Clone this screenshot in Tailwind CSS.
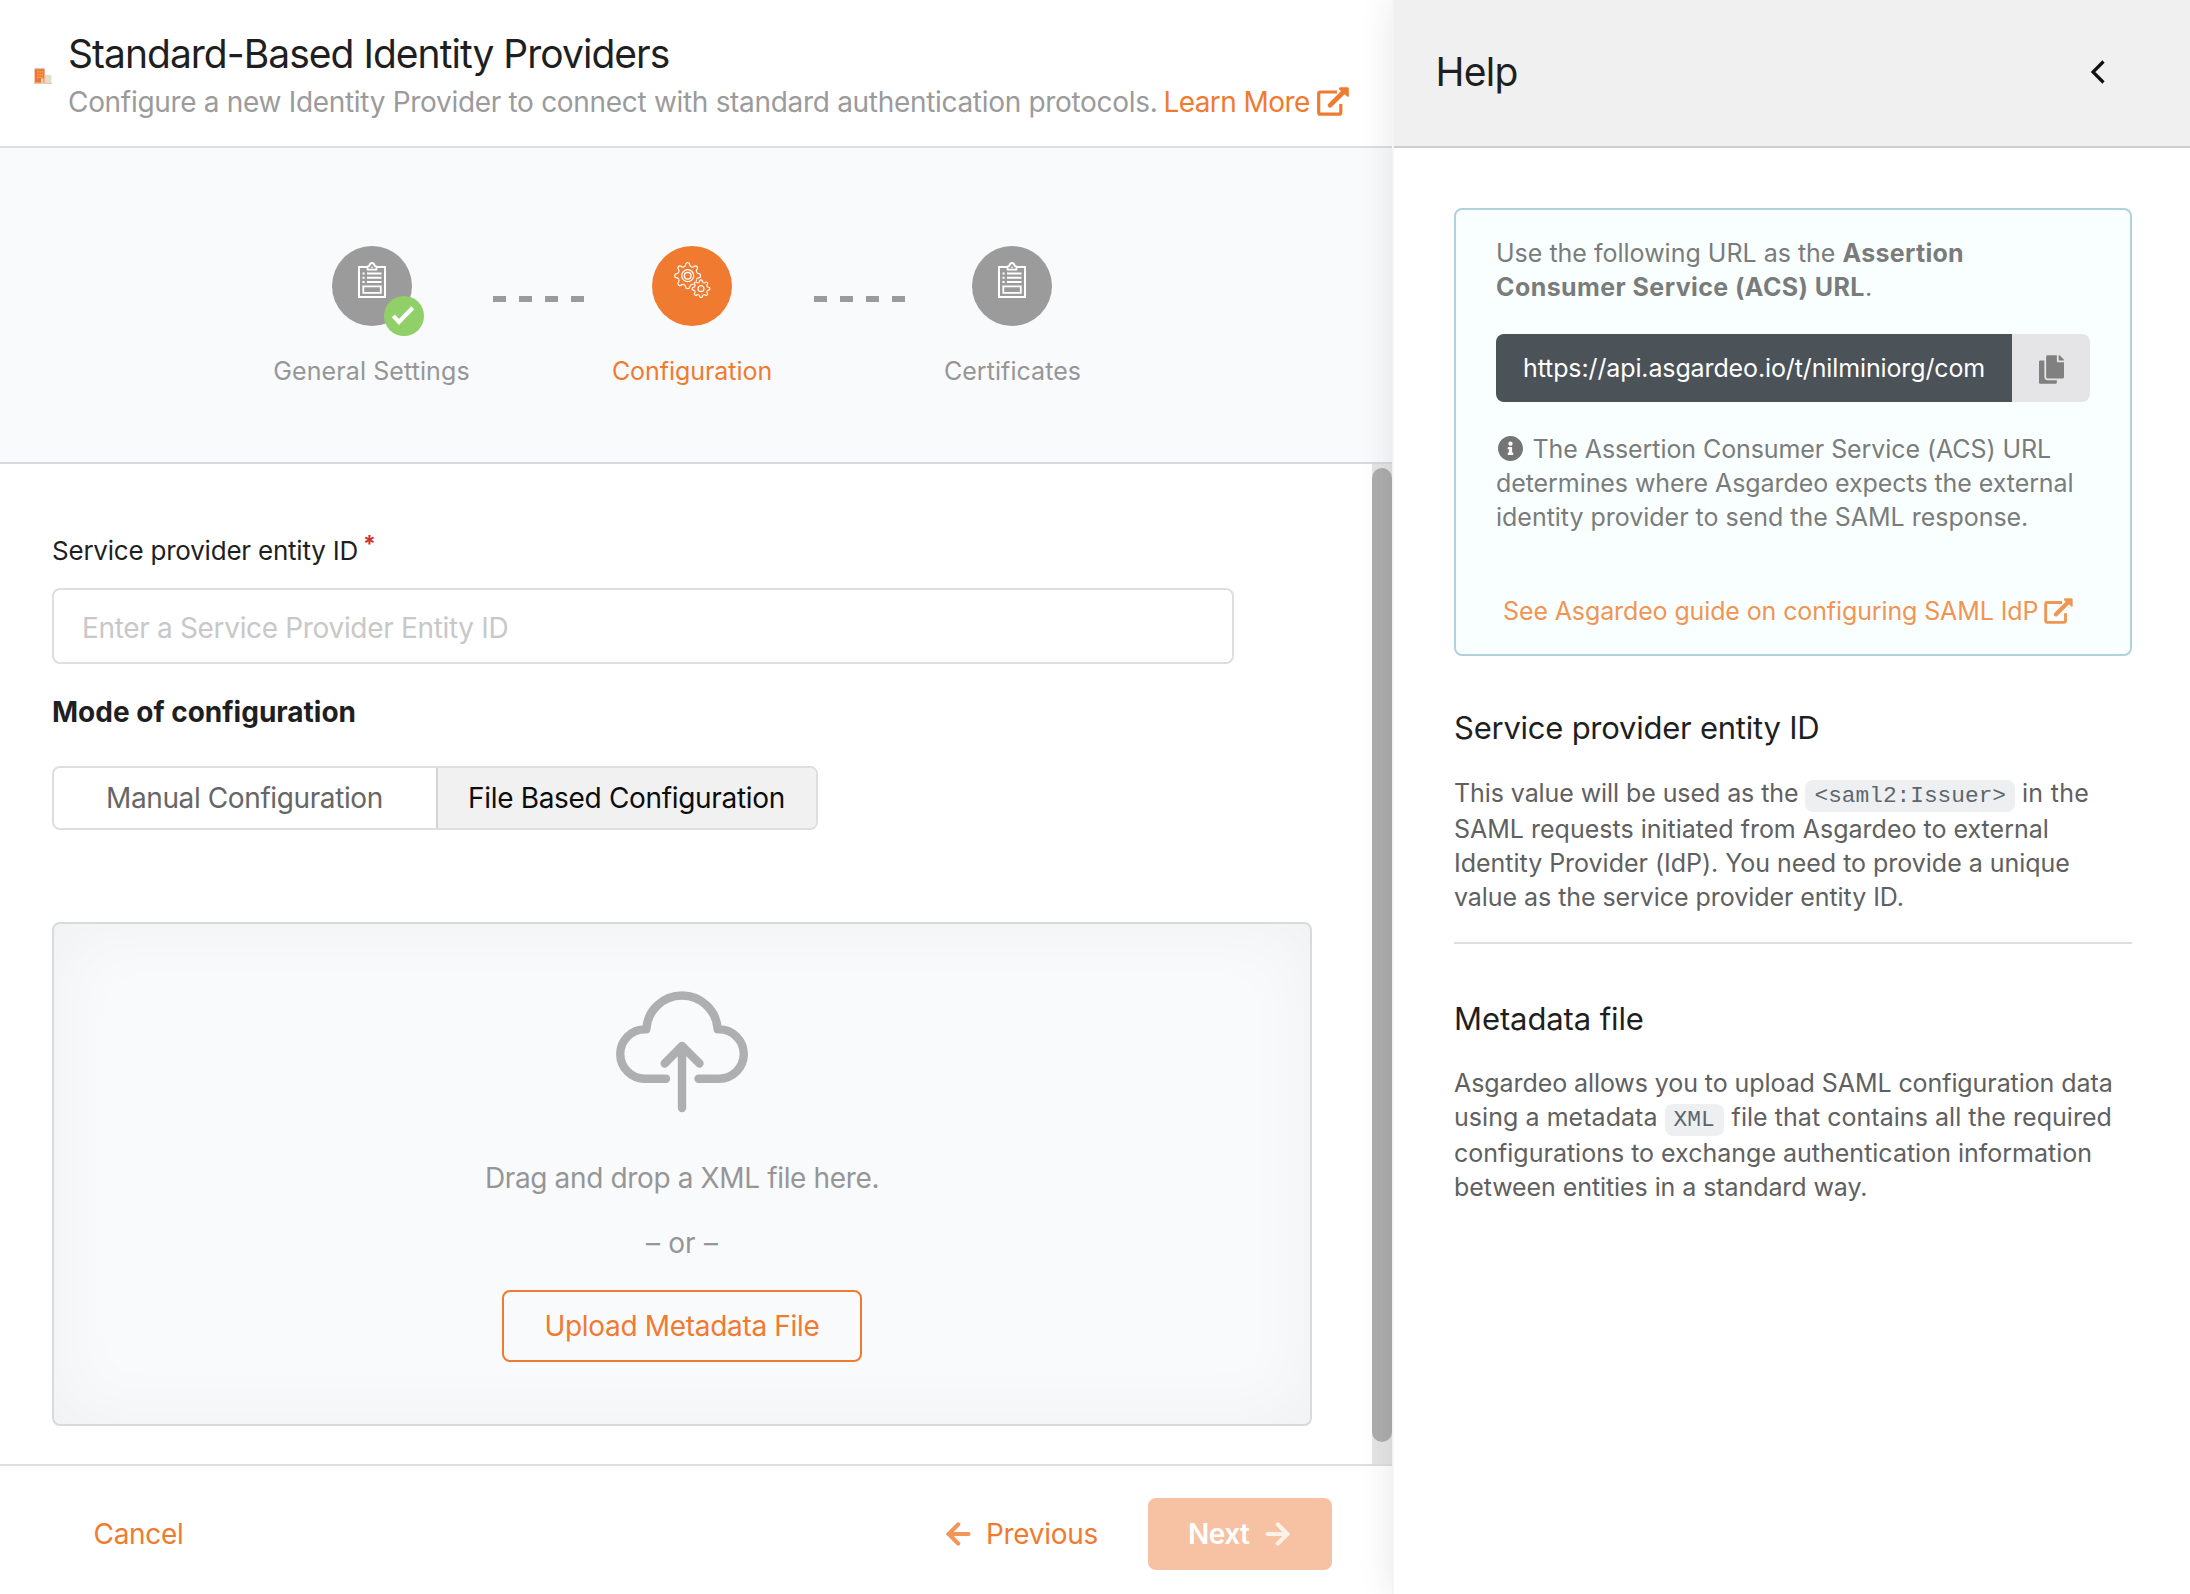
<!DOCTYPE html>
<html lang="en">
<head>
<meta charset="utf-8">
<title>Standard-Based Identity Providers</title>
<script src="https://cdn.jsdelivr.net/npm/@tailwindcss/browser@4"></script>
</head>
<body class="bg-white font-['Inter',sans-serif] text-[#1f1f1f]">

<!-- Shared symbols -->
<svg width="0" height="0" class="absolute">
  <defs>
    <symbol id="external" viewBox="0 0 32 29">
      <path d="M20 5H3.4Q1.7 5 1.7 6.7V25.4Q1.7 27.2 3.4 27.2H22Q23.8 27.2 23.8 25.4V17" fill="none" stroke="currentColor" stroke-width="3.2"/>
      <path d="M13 18.3L27 4.5" fill="none" stroke="currentColor" stroke-width="4.6" stroke-linecap="round"/>
      <path d="M23 .3H30.6Q31.8 .3 31.8 1.5V9Q31.6 10.4 30.3 9.6L22.2 2.4Q21.4 .7 23 .3Z" fill="currentColor"/>
    </symbol>
    <symbol id="clipboard" viewBox="0 0 28 36">
      <g fill="none" stroke="white">
        <path d="M9 5H1V35H27V5H19" stroke-width="2"/>
        <path d="M9.6 7.6V4.6L11.4 3.6Q12 1 14 1T16.6 3.6L18.4 4.6V7.6Z" stroke-width="1.8"/>
        <path d="M4.5 11.4H6.6M9 11.4H23.5M4.5 15.8H6.6M9 15.8H23.5M4.5 20.1H6.6M9 20.1H23.5" stroke-width="2"/>
        <path d="M5.3 24.4H22.8V30.8H5.3Z" stroke-width="1.8"/>
      </g>
      <path d="M12.6 5.8L14 4.2L15.4 5.8Z" fill="white"/>
    </symbol>
    <path id="tooth" d="M-3.6-8.9Q-2.3-9.4-2.1-11Q-1.9-13 0-13T2.1-11Q2.3-9.4 3.6-8.9"/>
    <g id="gear">
      <use href="#tooth"/><use href="#tooth" transform="rotate(45)"/><use href="#tooth" transform="rotate(90)"/><use href="#tooth" transform="rotate(135)"/>
      <use href="#tooth" transform="rotate(180)"/><use href="#tooth" transform="rotate(225)"/><use href="#tooth" transform="rotate(270)"/><use href="#tooth" transform="rotate(315)"/>
    </g>
  </defs>
</svg>

<div class="flex h-[1594px] w-[2190px] overflow-hidden">

  <!-- Wizard -->
  <main class="flex w-[1392px] shrink-0 flex-col">
    <header class="flex h-[148px] shrink-0 border-b-2 border-[#dedede] pt-[30px]">
      <svg class="ml-[34px] mt-[38px] h-4 w-[18px]" viewBox="0 0 18 16">
        <path d="M11 7H17.5V15H11Z" fill="#dcdfdc"/>
        <path d="M.6 .8H10.6V15H.6Z" fill="#ee7437"/>
        <path d="M1 0H10.400V1.200H1Z" fill="#c9c4bf"/>
        <path d="M3.200 3.800H9M3.200 6.600H9M3.200 9.400H9" stroke="#fcb84e" stroke-width="1.300" stroke-dasharray="1.400 .8" fill="none"/>
        <path d="M12.300 9.400H16.500M12.300 12H16.500" stroke="#f3dd9a" stroke-width="1.200" stroke-dasharray="1.200 .5" fill="none"/>
        <path d="M7 10.500H9.600V15H7Z" fill="#d9d5d4"/>
        <path d="M0 14.600H18V16H0Z" fill="#e8cb9e"/>
      </svg>
      <div class="ml-4 whitespace-nowrap">
        <h1 class="h-12 text-[39px] leading-[48px] tracking-[-0.98px]">Standard-Based Identity Providers</h1>
        <p class="mt-1.5 flex text-[28px] leading-9 tracking-[-0.31px] text-[#9b9b9b]">
          <span>Configure a new Identity Provider to connect with standard authentication protocols.</span>
          <a class="ml-1.5 flex tracking-[-0.58px] text-[#f07b30]">Learn More<svg class="ml-[7px] mt-[3px] h-[29px] w-8"><use href="#external"/></svg></a>
        </p>
      </div>
    </header>

    <section class="flex h-[316px] shrink-0 items-start border-b-2 border-[#d9dadd] bg-[#f9fafc] pl-[212px] pt-[98px] text-[25px] leading-[34px] text-[#969696]">
      <div class="flex w-[320px] flex-col items-center">
        <div class="relative flex h-20 w-20 justify-center rounded-full bg-[#9b9b9b] pt-4">
          <svg class="h-9 w-7"><use href="#clipboard"/></svg>
          <div class="absolute left-[52px] top-[50px] flex h-10 w-10 items-center justify-center rounded-full bg-[#91cf69]">
            <svg class="h-10 w-10" viewBox="0 0 40 40"><path d="M9.300 19.800L15 26L28.700 11.800" fill="none" stroke="white" stroke-width="4.200"/></svg>
          </div>
        </div>
        <span class="mr-px mt-7 tracking-[0.1px]">General Settings</span>
      </div>
      <div class="-ml-[39px] mt-[50px] flex w-[91px] justify-between"><i class="h-1.5 w-[13px] bg-[#9b9b9b]"></i><i class="h-1.5 w-[13px] bg-[#9b9b9b]"></i><i class="h-1.5 w-[13px] bg-[#9b9b9b]"></i><i class="h-1.5 w-[13px] bg-[#9b9b9b]"></i></div>
      <div class="-ml-[52px] flex w-[320px] flex-col items-center">
        <div class="flex h-20 w-20 justify-center rounded-full bg-[#f07b30] pt-4">
          <svg class="h-9 w-9 overflow-visible" viewBox="0 0 36 36" fill="none" stroke="white">
            <g transform="translate(13.700 13.700)" stroke-width="1.200"><use href="#gear"/><circle r="6"/><circle r="3.400" stroke-width="1.300"/></g>
            <g transform="translate(27 26.700)"><circle r="8.600" fill="#f07b30" stroke="none"/><g transform="scale(.68)" stroke-width="1.700"><use href="#gear"/></g><circle r="3" stroke-width="1.200"/></g>
          </svg>
        </div>
        <span class="mt-7 tracking-[-0.05px] text-[#f07b30]">Configuration</span>
      </div>
      <div class="-ml-[38px] mt-[50px] flex w-[91px] justify-between"><i class="h-1.5 w-[13px] bg-[#9b9b9b]"></i><i class="h-1.5 w-[13px] bg-[#9b9b9b]"></i><i class="h-1.5 w-[13px] bg-[#9b9b9b]"></i><i class="h-1.5 w-[13px] bg-[#9b9b9b]"></i></div>
      <div class="-ml-[53px] flex w-[320px] flex-col items-center">
        <div class="flex h-20 w-20 justify-center rounded-full bg-[#9b9b9b] pt-4">
          <svg class="h-9 w-7"><use href="#clipboard"/></svg>
        </div>
        <span class="ml-px mt-7 tracking-[0.06px]">Certificates</span>
      </div>
    </section>

    <div class="flex h-[1000px] shrink-0">
      <form class="w-[1372px] pl-[52px] pt-[72px]">
        <label class="flex h-[30px] text-[26px] leading-[30px] tracking-[-0.22px]">Service provider entity ID<span class="-mt-[7px] ml-[5px] text-[23px] font-bold leading-[30px] text-[#d0312d]">*</span></label>
        <div class="mt-[22px] flex h-[76px] w-[1182px] items-center rounded-lg border-2 border-[#dedede] pl-7 pt-[3px] text-[28px] tracking-[-0.33px] text-[#c8c8c8]">Enter a Service Provider Entity ID</div>
        <h2 class="mt-[30px] text-[28px] font-bold leading-9">Mode of configuration</h2>
        <div class="mt-9 flex h-16 w-[766px] overflow-hidden rounded-lg border-2 border-[#dedede] text-[28px]">
          <div class="flex w-[382px] items-center pl-[52px] tracking-[-0.39px] text-[#666]">Manual Configuration</div>
          <div class="flex flex-1 items-center border-l-2 border-[#d4d4d5] bg-[#f1f1f1] pl-[30px] tracking-[-0.32px] text-[#0d0d0d]">File Based Configuration</div>
        </div>
        <div class="mt-[92px] flex h-[504px] w-[1260px] flex-col items-center rounded-lg border-2 border-[#d9dadc] bg-[#f9fafc] pt-[68px] text-[28px] leading-9 text-[#969696] shadow-[inset_0_0_76px_rgba(0,0,0,0.045)]">
          <svg class="h-[120px] w-[132px] overflow-visible" viewBox="0 0 132 120" fill="none" stroke="#aeafb1" stroke-width="8.400" stroke-linecap="round" stroke-linejoin="round">
            <path d="M50 86.700H28.900A24.650 24.650 0 0 1 28.900 37.400H30.300A35.750 35.750 0 0 1 101.700 37.400H103.100A24.650 24.650 0 0 1 103.100 86.700H82.500"/>
            <path d="M66 54V116M48.700 71.500L66 54L83.500 71.500"/>
          </svg>
          <span class="mt-12 tracking-[-0.36px]">Drag and drop a XML file here.</span>
          <span class="mt-[29px] tracking-[0.18px]">– or –</span>
          <div class="mt-[29px] flex h-[72px] w-[360px] items-center justify-center rounded-lg border-2 border-[#f07b30] tracking-[-0.32px] text-[#f07b30]">Upload Metadata File</div>
        </div>
      </form>
      <div class="w-5 bg-[#e5e5e5] pt-1"><div class="h-[974px] rounded-full bg-[#adadad]"></div></div>
    </div>

    <footer class="flex h-[130px] items-start border-t-2 border-[#dedede] pt-8 text-[28px] text-[#f07b30]">
      <div class="flex h-[72px] w-[183px] items-center pl-[93.500px] tracking-[-0.3px]">Cancel</div>
      <div class="ml-[763px] flex h-[72px] w-[152px] items-center">
        <svg class="h-6 w-[25px]" viewBox="0 0 25 24" fill="none" stroke="#f3955a" stroke-width="4.200" stroke-linecap="round"><path d="M12.200 2.400L2.800 12L12.200 21.600"/><path d="M3 12H22.500"/></svg>
        <span class="ml-[15px] tracking-[-0.3px]">Previous</span>
      </div>
      <div class="ml-[50px] flex h-[72px] w-[184px] items-center rounded-lg bg-[#f7c2a3] pl-10 text-white">
        <span class="w-[77px] font-semibold tracking-[-0.54px]">Next</span>
        <svg class="h-6 w-[25px]" viewBox="0 0 25 24" fill="none" stroke="#fef1ea" stroke-width="4.200" stroke-linecap="round"><path d="M12.800 2.400L22.200 12L12.800 21.600"/><path d="M22 12H2.500"/></svg>
      </div>
    </footer>
  </main>

  <!-- Help panel -->
  <aside class="relative flex w-[798px] shrink-0 flex-col border-l-2 border-[#f5f5f5] bg-white shadow-[0_0_34px_rgba(34,36,38,0.11)]">
    <header class="flex h-[148px] shrink-0 items-center justify-between border-b-2 border-[#cfcfcf] bg-[#f0f0f0] pl-[41.500px] pr-[84px]">
      <h2 class="mt-[-3px] text-[39px] leading-[48px] tracking-[-0.7px]">Help</h2>
      <svg class="mt-[-3px] h-6 w-4" viewBox="0 0 16 24" fill="none" stroke="#111" stroke-width="3.200"><path d="M13.500 1.500L3 12L13.500 22.500"/></svg>
    </header>
    <div class="whitespace-nowrap pl-[60px] pt-[60px] text-[25px] leading-[34px] text-[#606060]">
      <section class="h-[448px] w-[678px] rounded-lg border-2 border-[#afd3dc] bg-[#f9fffe] pl-10 pt-[26px] text-[#7a7c7c]">
        <p><span>Use the following URL as the </span><b class="tracking-[0.3px]">Assertion</b></p>
        <p><b class="tracking-[0.42px]">Consumer Service (ACS) URL</b>.</p>
        <div class="mt-[30px] flex h-[68px] w-[594px] overflow-hidden rounded-lg">
          <div class="flex w-[516px] items-center bg-[#4b5258] pl-[27px] tracking-[-0.12px] text-white">https://api.asgardeo.io/t/nilminiorg/com</div>
          <div class="flex flex-1 items-center justify-center bg-[#e5e5e7] pt-0.5">
            <svg class="h-[29px] w-[25px]" viewBox="0 0 448 512" fill="#808080"><path d="M320 448v40c0 13.255-10.745 24-24 24H24c-13.255 0-24-10.745-24-24V120c0-13.255 10.745-24 24-24h72v296c0 30.879 25.121 56 56 56h168zm0-344V0H152c-13.255 0-24 10.745-24 24v368c0 13.255 10.745 24 24 24h272c13.255 0 24-10.745 24-24V128H344c-13.200 0-24-10.800-24-24zm120.971-31.029L375.029 7.029A24 24 0 0 0 358.059 0H352v96h96v-6.059a24 24 0 0 0-7.029-16.970z"/></svg>
          </div>
        </div>
        <p class="mt-[30px] flex tracking-[-0.08px]"><svg class="ml-0.5 mr-[9.500px] mt-1 h-[25px] w-[25px]" viewBox="8 8 496 496" fill="#747676"><path d="M256 8C119.043 8 8 119.083 8 256c0 136.997 111.043 248 248 248s248-111.003 248-248C504 119.083 392.957 8 256 8zm0 110c23.196 0 42 18.804 42 42s-18.804 42-42 42-42-18.804-42-42 18.804-42 42-42zm56 254c0 6.627-5.373 12-12 12h-88c-6.627 0-12-5.373-12-12v-24c0-6.627 5.373-12 12-12h12v-64h-12c-6.627 0-12-5.373-12-12v-24c0-6.627 5.373-12 12-12h64c6.627 0 12 5.373 12 12v100h12c6.627 0 12 5.373 12 12v24z"/></svg>The Assertion Consumer Service (ACS) URL</p>
        <p class="tracking-[-0.07px]">determines where Asgardeo expects the external</p>
        <p class="tracking-[-0.02px]">identity provider to send the SAML response.</p>
        <a class="mt-[60px] flex pl-[7px] tracking-[-0.12px] text-[#f19554]">See Asgardeo guide on configuring SAML IdP<svg class="ml-1.5 mt-1 h-[26px] w-[29px]"><use href="#external"/></svg></a>
      </section>

      <section class="w-[678px] border-b-2 border-[#dedede] pb-[28px] pt-[52px]">
        <h3 class="text-[31px] leading-10 tracking-[-0.24px] text-[#1f1f1f]">Service provider entity ID</h3>
        <p class="mt-[28px] h-9"><span class="tracking-[-0.08px]">This value will be used as the</span><code class="ml-[7px] rounded-lg bg-[#eeeff1] px-[9px] py-[3px] font-['Liberation_Mono',monospace] text-[22.8px] text-[#5c666e]">&lt;saml2:Issuer&gt;</code><span class="ml-[7px] tracking-[0.3px]">in the</span></p>
        <p>SAML requests initiated from Asgardeo to external</p>
        <p class="tracking-[-0.02px]">Identity Provider (IdP). You need to provide a unique</p>
        <p class="tracking-[-0.06px]">value as the service provider entity ID.</p>
      </section>

      <section class="pt-[55px]">
        <h3 class="text-[31px] leading-10 tracking-[-0.1px] text-[#1f1f1f]">Metadata file</h3>
        <p class="mt-[27px] tracking-[-0.08px]">Asgardeo allows you to upload SAML configuration data</p>
        <p class="h-9"><span class="tracking-[0.05px]">using a metadata</span><code class="ml-[7px] rounded-lg bg-[#eeeff1] px-[9px] py-[3px] font-['Liberation_Mono',monospace] text-[22.8px] text-[#5c666e]">XML</code><span class="ml-2 tracking-[0.04px]">file that contains all the required</span></p>
        <p>configurations to exchange authentication information</p>
        <p class="tracking-[-0.08px]">between entities in a standard way.</p>
      </section>
    </div>
  </aside>
</div>
</body>
</html>
